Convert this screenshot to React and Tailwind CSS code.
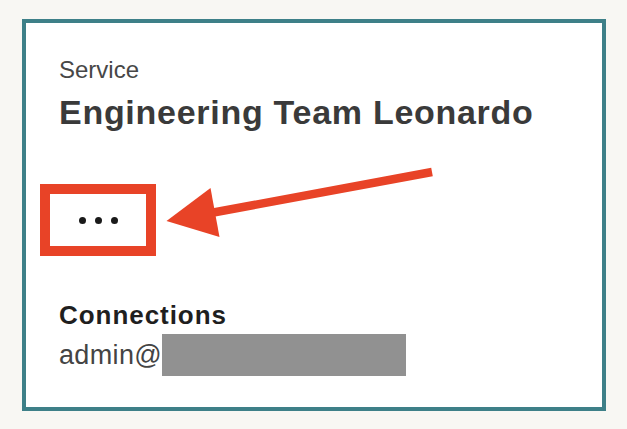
import React from 'react';

const Dots = () => (
  <div className="relative flex h-[52px] w-[78px] items-center justify-center gap-[9px]">
    <span className="h-[7px] w-[7px] rounded-full bg-[#1a1a1a]" />
    <span className="h-[7px] w-[7px] rounded-full bg-[#1a1a1a]" />
    <span className="h-[7px] w-[7px] rounded-full bg-[#1a1a1a]" />
    {/* annotation box */}
    <div className="absolute left-[-19px] top-[-10px] h-[72px] w-[116px] border-[10px] border-[#e84327]" />
  </div>
);

const App = () => {
  return (
    <div
      className="relative h-[429px] w-[627px] overflow-hidden bg-[#f8f7f3] pl-[22px] pt-[19px]"
      style={{ fontFamily: '"Liberation Sans", Arial, sans-serif' }}
    >
      <div className="w-[584px] border-4 border-[#3e8088] bg-white px-[33px] pb-[31px] pt-[33px]">
        <div className="text-[24px] leading-[28px] text-[#474747]">Service</div>
        <h1 className="mt-2 text-[34px] font-bold leading-[40px] tracking-[0.72px] text-[#3a3a3a]">
          Engineering Team Leonardo
        </h1>
        <div className="mt-[62px]">
          <Dots />
        </div>
        <h2 className="mt-[55px] text-[26px] font-bold leading-[28px] tracking-[0.95px] text-[#1f1f1f]">
          Connections
        </h2>
        <div className="mt-[5px] flex h-[42px] items-center">
          <span className="text-[27px] leading-[42px] tracking-[0.35px] text-[#444444]">admin@</span>
          <span className="h-[42px] w-[244px] bg-[#919191]" />
        </div>
      </div>

      {/* annotation arrow */}
      <svg className="pointer-events-none absolute inset-0" width="627" height="429" viewBox="0 0 627 429">
        <line x1="432" y1="172" x2="208" y2="213.5" stroke="#e84327" strokeWidth="8.5" />
        <polygon points="166.5,221 210.5,188 219.5,237" fill="#e84327" />
      </svg>
    </div>
  );
};

export default App;
